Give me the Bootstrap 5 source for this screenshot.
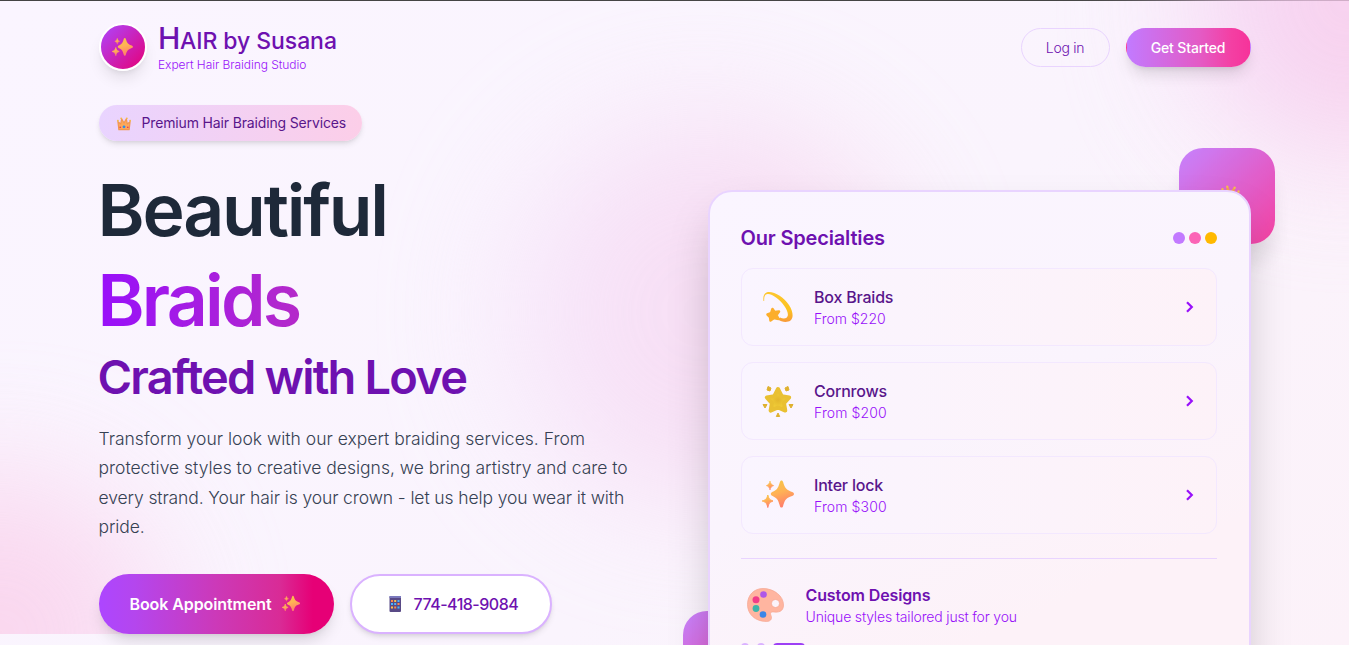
<!DOCTYPE html>
<html lang="en">
<head>
<meta charset="utf-8">
<meta name="viewport" content="width=device-width, initial-scale=1">
<title>HAIR by Susana</title>
<link href="https://cdn.jsdelivr.net/npm/bootstrap@5.3.0/dist/css/bootstrap.min.css" rel="stylesheet">
<style>
body{font-family:Inter,"Liberation Sans",sans-serif;height:645px;overflow:hidden;border-top:1px solid #444;background:linear-gradient(135deg,#faf5ff,#faf4fd 60%,#fcf2f9);white-space:nowrap}
svg{display:block;flex:none}
.page-wrap{width:1152px;margin-left:98.500px;position:relative}
.glow-layer{position:absolute;inset:0 0 auto 0;height:634px;overflow:hidden}
.glow{position:absolute;border-radius:50%;filter:blur(64px)}
.glow-tr{width:320px;height:320px;right:-160px;top:-160px;background:linear-gradient(90deg,#f4d0f4,#f9c3e2);opacity:.8}
.glow-bl{width:320px;height:320px;left:-160px;bottom:-160px;background:linear-gradient(90deg,#fbc6e4,#f9d2ee);opacity:.72}
.glow-mid{width:384px;height:384px;left:510px;top:120px;background:linear-gradient(90deg,#f5def9,#f6c8e6);opacity:.65}
.site-nav{height:93px;padding-bottom:1px}
.logo-ring{width:48px;height:48px;border:2px solid #fff;background:linear-gradient(135deg,#ad46ff,#e60076);box-shadow:0 10px 15px -3px rgba(0,0,0,.1),0 4px 6px -4px rgba(0,0,0,.1)}
.brand-name{font-size:23px;font-weight:540;line-height:32px;color:#6e11b0;letter-spacing:-.07px}
.brand-name b{font-size:30px;font-weight:540;letter-spacing:-.35px}
.brand-sub{font-size:12px;line-height:16px;letter-spacing:-.05px;color:#9810fa;font-weight:350}
.pill{border-radius:99px;height:39px;font-size:14px}
.pill-login{width:89px;border:1px solid #e9d4ff;color:#6e11b0;letter-spacing:-.3px;font-weight:350}
.pill-start{width:125px;border:1px solid transparent;background:linear-gradient(90deg,#c27aff,#e45ac4 60%,#f43fa3 85%,#f6339a);color:#fff;font-weight:500;letter-spacing:-.15px;box-shadow:0 10px 15px -3px rgba(0,0,0,.12),0 4px 6px -4px rgba(0,0,0,.12)}
.promo{margin-top:11px;width:263px;height:36px;border-radius:99px;padding-left:17px;background:linear-gradient(90deg,#e9d4ff,#fccee8);color:#59168b;font-size:14px;letter-spacing:-.15px;box-shadow:0 4px 6px -1px rgba(0,0,0,.1),0 2px 4px -2px rgba(0,0,0,.1)}
.promo span{margin:-2px 0 0 10px}
.hero-col{width:544px}
.hero-title{margin:24px 0 0 -1px;font-weight:580;line-height:90px;font-size:71.5px;color:#1e2939}
.hero-title span{display:block}
.t-one{letter-spacing:-2.2px}
.t-two{letter-spacing:-2.8px;color:transparent;background:linear-gradient(90deg,#9810fa,#b52ac8 38%,#e60076);-webkit-background-clip:text;background-clip:text}
.t-three{font-size:47px;line-height:64px;letter-spacing:-1.8px;color:#6e11b0}
.hero-text{margin:15px 0 0;font-size:17.5px;line-height:29.25px;color:#364153;font-weight:360}
.hero-text span{display:block}
.cta{height:60px;border-radius:99px;font-size:16px}
.cta-book{width:235px;padding-left:31px;gap:10px;color:#fff;font-weight:600;letter-spacing:-.09px;background:linear-gradient(90deg,#ad46ff,#b446ee 15%,#cc39b8 50%,#d92b96 77%,#e60076 91%);box-shadow:0 10px 15px -3px rgba(0,0,0,.13),0 4px 6px -4px rgba(0,0,0,.1)}
.cta-phone{width:202px;padding-left:35px;gap:11px;border:2px solid #dab2ff;background:#fff;color:#6e11b0;font-weight:450;letter-spacing:-.5px;box-shadow:0 4px 6px -1px rgba(0,0,0,.1),0 2px 4px -2px rgba(0,0,0,.1)}
.spec-wrap{width:543px;margin-top:96px;position:relative;z-index:0}
.tile{position:absolute;z-index:-1;border-radius:24px;background:linear-gradient(135deg,#c27aff,#f6339a)}
.tile-a{width:96px;height:96px;right:-24px;top:-42px;box-shadow:0 20px 25px -5px rgba(0,0,0,.12);opacity:.92}
.tile-a svg{margin:36px 0 0 40px;transform:rotate(8deg)}
.tile-b{width:80px;height:80px;left:-25px;top:421px;opacity:.92}
.spec-card{border:2px solid #e9d4ff;border-radius:24px;height:520px;padding:32px 31.500px 0 31px;background:linear-gradient(155deg,#faf5ff,#faf4fd 45%,#fdf2f8 75%);box-shadow:0 25px 50px -12px rgba(0,0,0,.27)}
.spec-head{height:28px;margin-bottom:16px;font-size:20px;font-weight:570;letter-spacing:-.17px;color:#6e11b0}
.dot{width:12px;height:12px;border-radius:50%}
.spec-row{height:78px;margin-bottom:16px;border:1px solid #f3e8ff;border-radius:12px;background:linear-gradient(90deg,#faf5ff,#fdf2f8);padding:0 21px 0 20.500px}
.row-name{font-size:16px;font-weight:500;line-height:24px;color:#59168b;letter-spacing:-.2px}
.row-price{font-size:14px;line-height:20px;color:#9810fa;font-weight:350}
.custom{border-top:1px solid #e9d4ff;margin-top:24px;padding:24px 0 0 5px;gap:21px}
.pager{gap:8px;margin-top:16px}
.pager i{width:8px;height:8px;border-radius:9px;background:#dab2ff}
.pager i:last-child{width:32px;background:#9d3ff5}
</style>
</head>
<body>
<svg width="0" height="0" style="position:absolute">
<defs>
<linearGradient id="gold" x1="0" y1="0" x2=".3" y2="1"><stop offset="0" stop-color="#f5c945"/><stop offset=".5" stop-color="#ffb255"/><stop offset="1" stop-color="#ff806a"/></linearGradient>
<linearGradient id="comet" x1="0" y1="0" x2="0" y2="1"><stop offset="0" stop-color="#fdc72f"/><stop offset=".6" stop-color="#fcc21f"/><stop offset="1" stop-color="#f89a3a"/></linearGradient>
<radialGradient id="star"><stop offset="0" stop-color="#e3b62c"/><stop offset=".7" stop-color="#f0cc37"/><stop offset="1" stop-color="#d9ab25"/></radialGradient>
<symbol id="sparkles" viewBox="0 0 32 32"><g fill="url(#gold)"><path d="M19.500 1.500c.8 0 1.300.7 1.600 1.600 1.400 4.800 2.400 7.500 7.600 9.300 2.200.8 3.300 1.300 3.300 2.500s-1.100 1.700-3.300 2.500c-5.200 1.800-6.200 4.500-7.600 9.600-.3 1-.8 1.600-1.600 1.600s-1.300-.6-1.600-1.600c-1.400-5-2.500-7.700-6-9.300-1.900-.8-3.100-1.400-3.100-2.700s1.200-1.900 3.100-2.700c3.500-1.600 4.600-4.300 6-9.200.3-1 .8-1.600 1.600-1.600z"/><path d="M5.800 16c.9 3.500 1.500 4.600 5.200 6-3.700 1.400-4.300 2.500-5.200 6.500-.9-4-1.500-5.100-5.600-6.500 4.100-1.400 4.700-2.500 5.600-6z" stroke="url(#gold)" stroke-linejoin="round"/><path d="M8 2c.6 2.600 1.200 3.500 3.700 4.600C9.200 7.700 8.600 8.500 8 11c-.6-2.500-1.200-3.300-3.700-4.400C6.800 5.500 7.400 4.600 8 2z" stroke="url(#gold)" stroke-width=".6"/></g></symbol>
<symbol id="crown" viewBox="0 0 32 32"><path d="M3 12l6 5 2-11 5 9 5-9 2 11 6-5-2 17H5z" fill="#fda85a" stroke="#f2964f" stroke-width="2.500" stroke-linejoin="round"/><g fill="#f5b843"><circle cx="3" cy="10" r="2"/><circle cx="10" cy="5" r="2"/><circle cx="22" cy="5" r="2"/><circle cx="29" cy="10" r="2"/></g><circle cx="16" cy="23" r="3" fill="#2a8df0"/><circle cx="8" cy="24" r="1.800" fill="#e7385e"/><circle cx="24" cy="24" r="1.800" fill="#e7385e"/></symbol>
</defs></svg>
<div class="glow-layer"><div class="glow glow-tr"></div><div class="glow glow-bl"></div><div class="glow glow-mid"></div></div>
<div class="page-wrap">
<nav class="site-nav d-flex align-items-center justify-content-between">
<div class="d-flex align-items-center">
<div class="logo-ring rounded-circle d-flex align-items-center justify-content-center"><svg width="21" height="21"><use href="#sparkles"/></svg></div>
<div style="margin-left:11.500px"><div class="brand-name"><b>H</b>AIR by Susana</div><div class="brand-sub">Expert Hair Braiding Studio</div></div>
</div>
<div class="d-flex gap-3">
<a class="pill pill-login d-flex align-items-center justify-content-center text-decoration-none">Log in</a>
<a class="pill pill-start d-flex align-items-center justify-content-center text-decoration-none">Get Started</a>
</div>
</nav>
<main class="d-flex justify-content-between align-items-start">
<div class="hero-col">
<div class="promo d-flex align-items-center"><svg width="16" height="15" viewBox="0 0 32 32"><use href="#crown"/></svg><span>Premium Hair Braiding Services</span></div>
<h1 class="hero-title"><span class="t-one">Beautiful</span><span class="t-two">Braids</span><span class="t-three">Crafted with Love</span></h1>
<p class="hero-text"><span style="letter-spacing:.01px">Transform your look with our expert braiding services. From</span><span style="letter-spacing:-.01px">protective styles to creative designs, we bring artistry and care to</span><span style="letter-spacing:-.11px">every strand. Your hair is your crown - let us help you wear it with</span><span style="letter-spacing:-.1px">pride.</span></p>
<div class="d-flex gap-3" style="margin-top:33px">
<a class="cta cta-book d-flex align-items-center text-decoration-none">Book Appointment<svg width="18" height="18"><use href="#sparkles"/></svg></a>
<a class="cta cta-phone d-flex align-items-center text-decoration-none"><svg width="16" height="18" viewBox="0 0 16 18"><rect x="2.500" y="1" width="11.500" height="16" rx="1" fill="#594a86"/><rect x="2.500" y="1" width="11.500" height="2" fill="#7b79bd"/><g><path d="M4 5h2v2H4zM10.500 8h2v2h-2zM7.200 11.500h2v2h-2z" fill="#ff8a4c"/><path d="M7.200 5h2v2h-2zM4 11.500h2v2H4z" fill="#ffc14b"/><path d="M10.500 5h2v2h-2zM7.200 8h2v2h-2zM10.500 11.500h2v2h-2z" fill="#49b6ff"/><path d="M4 8h2v2H4z" fill="#49b6ff"/></g></svg>774-418-9084</a>
</div>
</div>
<div class="spec-wrap">
<div class="tile tile-a"><svg width="22" height="20"><use href="#crown"/></svg></div><div class="tile tile-b"></div>
<div class="spec-card">
<div class="spec-head d-flex align-items-center justify-content-between"><span>Our Specialties</span><div class="d-flex gap-1"><div class="dot" style="background:#c27aff"></div><div class="dot" style="background:#fb64b6"></div><div class="dot" style="background:#ffb900"></div></div></div>
<div class="spec-row d-flex align-items-center"><svg width="32" height="32" viewBox="0 0 32 32"><path d="M1.500 10C1 6 1.500 2.500 5 1.200 11-.5 22 6 27 14c4.500 7 4.500 13 1.500 15.500-3.500 2.500-9 1.500-12.500-1l2-2c2.500 1.200 5 1.300 6.500.2 2.500-2 1.500-6.500-2-11.500C18 8.500 10 2.500 5.500 3 2.500 3.500 2 6 2.200 10z" fill="url(#comet)"/><path d="M10.500 18l2 3 4.500-.5-2.500 3.500 2 4-4.500-1-3.500 2.500-.5-3.500-2.500-2.500 3.500-1.200z" fill="#fcae2b" stroke="#fcae2b" stroke-width="2.500" stroke-linejoin="round"/></svg><div style="margin-left:20px" class="me-auto"><div class="row-name">Box Braids</div><div class="row-price">From $220</div></div><svg width="10" height="14" viewBox="0 0 10 14" fill="none" stroke="#9810fa" stroke-width="2.200"><path d="M2 2.200L6.800 7 2 11.800"/></svg></div>
<div class="spec-row d-flex align-items-center"><svg width="32" height="32" viewBox="0 0 32 32"><path d="M16 4l3.700 7.200 7.500 1.200-5.200 5.700 1.300 7.500L16 22.500l-7.400 3.100 1.300-7.500-5.100-5.700 7.500-1.200z" fill="url(#star)" stroke="#e9c032" stroke-width="4" stroke-linejoin="round"/><g fill="#dfb12f" stroke="#dfb12f" stroke-linejoin="round"><path d="M6 1.500l3 1.500-1 3-3-1zM26 1.500L23 3l1 3 3-1zM1 19.500h4L3 23zM31 19.500h-4l2 3.500zM16 28l1.700 3.500h-3.400z"/></g></svg><div style="margin-left:20px" class="me-auto"><div class="row-name">Cornrows</div><div class="row-price" style="letter-spacing:.12px">From $200</div></div><svg width="10" height="14" viewBox="0 0 10 14" fill="none" stroke="#9810fa" stroke-width="2.200"><path d="M2 2.200L6.800 7 2 11.800"/></svg></div>
<div class="spec-row d-flex align-items-center"><svg width="32" height="32"><use href="#sparkles"/></svg><div style="margin-left:20px" class="me-auto"><div class="row-name">Inter lock</div><div class="row-price" style="letter-spacing:.12px">From $300</div></div><svg width="10" height="14" viewBox="0 0 10 14" fill="none" stroke="#9810fa" stroke-width="2.200"><path d="M2 2.200L6.800 7 2 11.800"/></svg></div>
<div class="custom d-flex align-items-center"><svg width="39" height="36" viewBox="0 0 39 36"><path fill-rule="evenodd" d="M17 1.500C28 1.500 37.500 9 37.500 18c0 7-5.500 7.500-10 7-3-.3-3.500 1-2.500 3.500 1.500 4-1 6-4.500 6C9 34.500 1.500 27 1.500 17.500 1.500 8 8 1.500 17 1.500zM29.500 12.500a4 4 0 1 0 .01 0z" fill="#ffb5a0" stroke="#f5a58f" stroke-width=".7"/><circle cx="17.500" cy="7.500" r="3.300" fill="#ae57e8"/><circle cx="10" cy="12.800" r="3.500" fill="#f23c89"/><circle cx="10" cy="21.500" r="3.400" fill="#3db5a9"/><circle cx="17" cy="27.500" r="3.300" fill="#3b86e8"/></svg><div><div class="row-name" style="font-weight:570;color:#6e11b0;letter-spacing:-.12px">Custom Designs</div><div class="row-price" style="letter-spacing:-.17px">Unique styles tailored just for you</div></div></div>
<div class="pager d-flex"><i></i><i></i><i></i></div>
</div>
</div>
</main>
</div>
<script src="https://cdn.jsdelivr.net/npm/bootstrap@5.3.0/dist/js/bootstrap.bundle.min.js"></script>
</body>
</html>
